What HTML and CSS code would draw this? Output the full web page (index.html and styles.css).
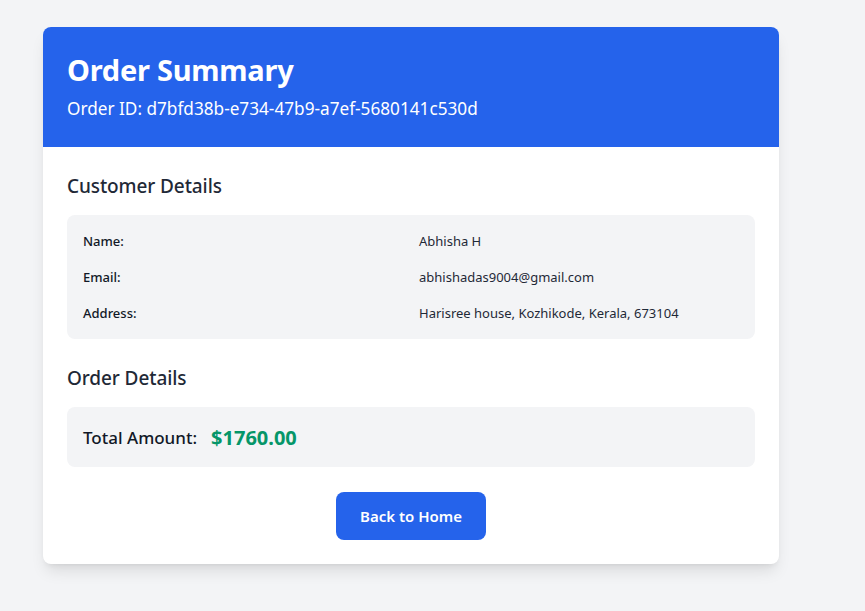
FILE: index.html
```html
<!DOCTYPE html>
<html>
<head>
<meta charset="utf-8">
<link rel="stylesheet" href="styles.css">
</head>
<body>
<div class="page">
  <div class="card">
    <div class="card-header">
      <h1 class="title">Order Summary</h1>
      <p class="order-id">Order ID: d7bfd38b-e734-47b9-a7ef-5680141c530d</p>
    </div>
    <div class="card-body">
      <h2 class="section-title">Customer Details</h2>
      <div class="panel details-grid">
        <div class="label">Name:</div>
        <div class="value">Abhisha H</div>
        <div class="label">Email:</div>
        <div class="value">abhishadas9004@gmail.com</div>
        <div class="label">Address:</div>
        <div class="value">Harisree house, Kozhikode, Kerala, 673104</div>
      </div>
      <h2 class="section-title second">Order Details</h2>
      <div class="panel total-row">
        <span class="total-label">Total Amount:</span>
        <span class="total-value">$1760.00</span>
      </div>
      <div class="actions">
        <button class="btn">Back to Home</button>
      </div>
    </div>
  </div>
</div>
</body>
</html>
```
FILE: styles.css
```css
* { box-sizing: border-box; }
html, body { margin: 0; padding: 0; }
body {
  background: #f3f4f6;
  font-family: "Noto Sans", "Open Sans", sans-serif;
  color: #1f2937;
  min-height: 611px;
}
.page {
  padding: 27px 0 0 43px;
}
.card {
  width: 736px;
  background: #ffffff;
  border-radius: 8px;
  overflow: hidden;
  box-shadow: 0 10px 15px -3px rgba(0,0,0,0.1), 0 4px 6px -4px rgba(0,0,0,0.1);
}
.card-header {
  background: #2563eb;
  color: #ffffff;
  padding: 24px;
}
.title {
  margin: 0;
  font-size: 29px;
  line-height: 37px;
  font-weight: 700;
  letter-spacing: -0.25px;
}
.order-id {
  margin: 7px 0 0;
  font-size: 17.2px;
  line-height: 28px;
  font-weight: 400;
}
.card-body {
  padding: 24px;
}
.section-title {
  margin: 1px 0 15px;
  font-size: 19px;
  line-height: 28px;
  font-weight: 500;
  color: #1f2937;
  letter-spacing: -0.1px;
}
.section-title.second {
  margin-top: 25px;
}
.panel {
  background: #f3f4f6;
  border-radius: 8px;
  padding: 16px;
}
.details-grid {
  display: grid;
  grid-template-columns: 1fr 1fr;
  gap: 16px;
  font-size: 13px;
  line-height: 20px;
}
.label {
  font-weight: 500;
  color: #111827;
}
.value {
  color: #1f2937;
}
.total-row {
  display: flex;
  align-items: center;
  gap: 14px;
  height: 60px;
  line-height: 28px;
}
.total-label {
  font-size: 17px;
  font-weight: 500;
  color: #111827;
  padding-top: 1px;
}
.total-value {
  font-size: 20px;
  font-weight: 700;
  color: #059669;
  padding-top: 1px;
}
.actions {
  display: flex;
  justify-content: center;
  margin-top: 25px;
}
.btn {
  font-family: inherit;
  background: #2563eb;
  color: #ffffff;
  border: none;
  border-radius: 8px;
  padding: 12px 24px;
  font-size: 15px;
  line-height: 24px;
  font-weight: 600;
  width: 150px;
  cursor: pointer;
}
```
